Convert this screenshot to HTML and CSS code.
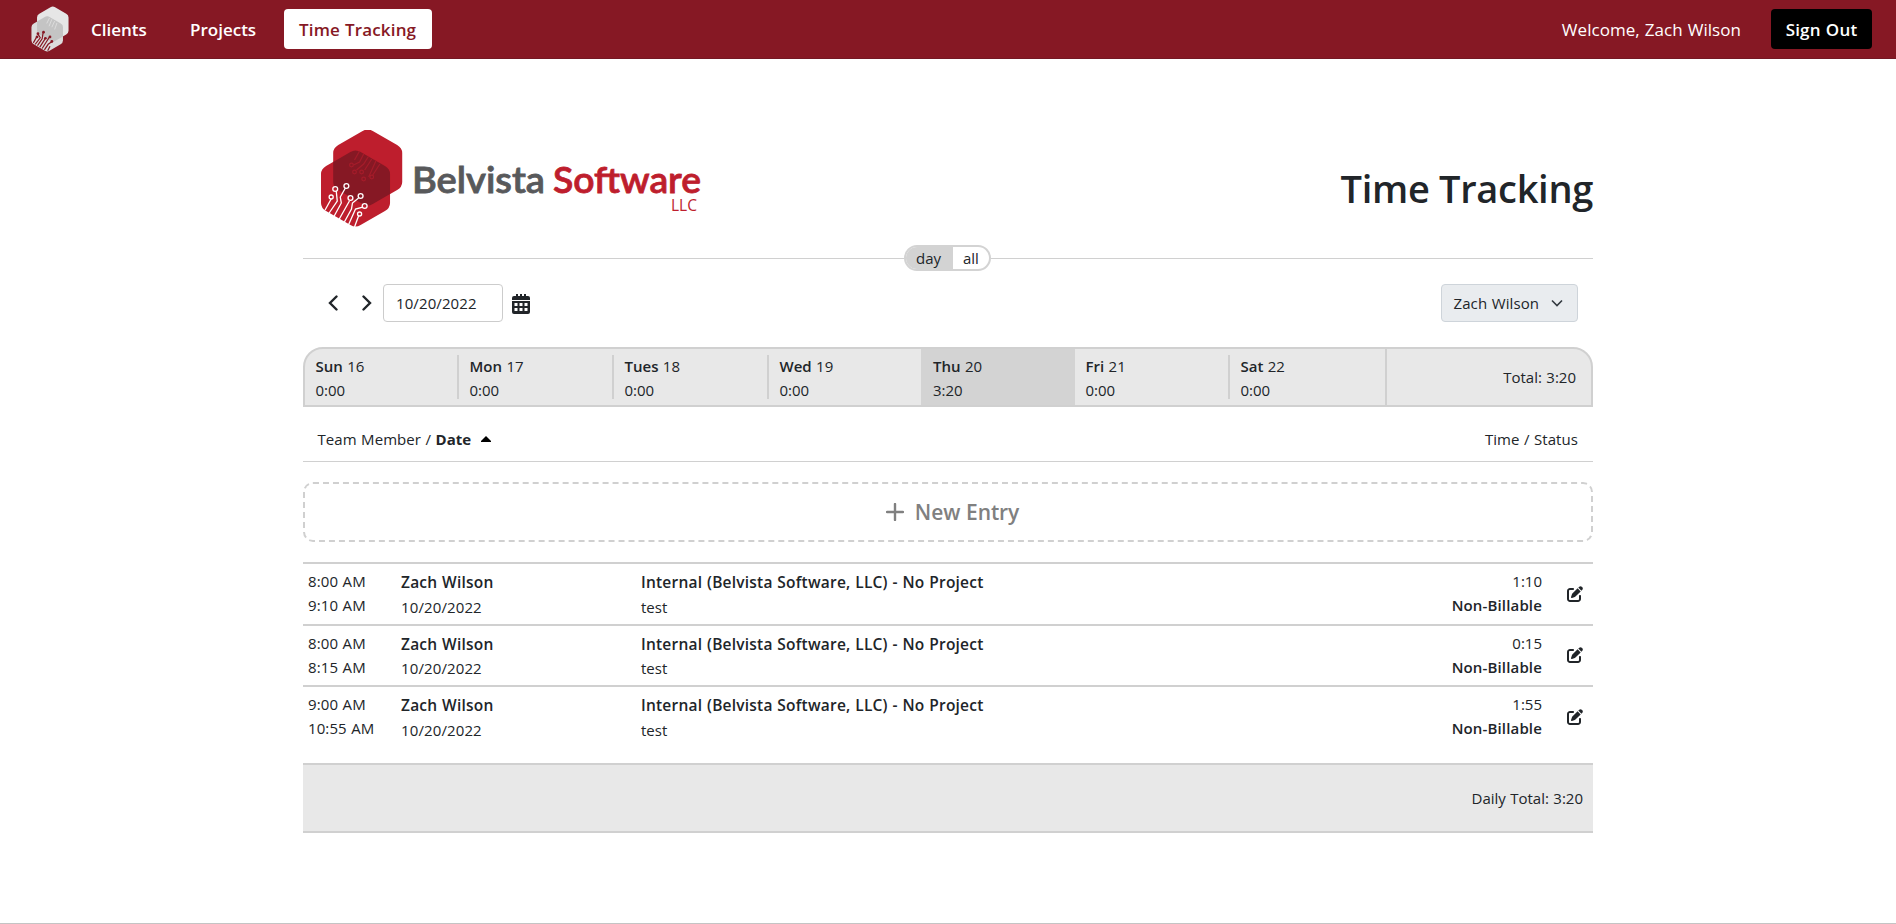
FILE: index.html
```html
<!DOCTYPE html>
<html lang="en">
<head>
<meta charset="utf-8">
<title>Time Tracking</title>
<link rel="stylesheet" href="styles.css">
</head>
<body>
<svg class="defs" width="0" height="0" aria-hidden="true">
  <symbol id="edit" viewBox="0 0 512 512"><path d="M471.600 21.700c-21.900-21.900-57.300-21.900-79.200 0L362.300 51.700l97.900 97.900 30.100-30.100c21.900-21.900 21.900-57.300 0-79.200L471.600 21.700zm-299.200 220c-6.100 6.100-10.800 13.600-13.500 21.900l-29.600 88.800c-2.900 8.600-.6 18.100 5.800 24.600s15.900 8.700 24.600 5.800l88.800-29.600c8.200-2.700 15.700-7.400 21.900-13.500L437.700 172.300 339.700 74.300 172.400 241.700zM96 64C43 64 0 107 0 160V416c0 53 43 96 96 96H352c53 0 96-43 96-96V320c0-17.700-14.300-32-32-32s-32 14.300-32 32v96c0 17.700-14.300 32-32 32H96c-17.700 0-32-14.300-32-32V160c0-17.700 14.300-32 32-32h96c17.700 0 32-14.300 32-32s-14.300-32-32-32H96z"/></symbol>
</svg>
<header class="nav">
  <svg class="nav-logo" viewBox="0 0 82 98">
    <path fill="#e6e6e6" d="M42 2q5-3 10 0L76 16q5 3 5 8V53q0 5-5 8L52 75q-5 3-10 0L18 61q-5-3-5-8V24q0-5 5-8z"/>
    <path fill="#dcdcdc" d="M30 23q5-3 10 0L64 37q5 3 5 8V74q0 5-5 8L40 96q-5 3-10 0L6 82q-5-3-5-8V45q0-5 5-8z"/>
    <path fill="#c4c4c4" d="M13 33 30 23q5-3 10 0L64 37q5 3 5 8V65L52 75q-5 3-10 0L18 61q-5-3-5-8z"/>
    <g fill="none" stroke="#861824" stroke-width="2.600"><path d="M5 79 13 65M9 82 20 68 15 60M14 85 24 70 26 58M19 88 30 71M24 91 33 77 40 66M29 94 37 82 44 77M36 96 41 86"/></g>
    <g fill="#861824"><circle cx="13" cy="66" r="3"/><circle cx="15" cy="59" r="3"/><circle cx="27" cy="56" r="3"/><circle cx="31" cy="69" r="3"/><circle cx="41" cy="66" r="3"/><circle cx="45" cy="76" r="3"/></g>
    <path fill="none" stroke="#dedede" stroke-width="2" d="M40 25 34 37M45 28 39 43M51 32 45 45M56 36 51 50"/>
  </svg>
  <nav class="nav-links">
    <a class="nav-link clients">Clients</a>
    <a class="nav-link projects">Projects</a>
    <a class="nav-link active">Time Tracking</a>
  </nav>
  <span class="welcome">Welcome, Zach Wilson</span>
  <a class="sign-out">Sign Out</a>
</header>
<main class="page">
  <section class="masthead">
    <svg class="brand" viewBox="0 0 390 106" role="img" aria-label="Belvista Software LLC">
      <g transform="translate(0 -1) scale(1.015 1)">
        <path fill="#be1e2d" d="M42 2q5-3 10 0L76 16q5 3 5 8V53q0 5-5 8L52 75q-5 3-10 0L18 61q-5-3-5-8V24q0-5 5-8z"/>
        <path fill="#be1e2d" d="M30 23q5-3 10 0L64 37q5 3 5 8V74q0 5-5 8L40 96q-5 3-10 0L6 82q-5-3-5-8V45q0-5 5-8z"/>
        <path fill="#861824" d="M13 33 30 23q5-3 10 0L64 37q5 3 5 8V65L52 75q-5 3-10 0L18 61q-5-3-5-8z"/>
        <g fill="none" stroke="#fff" stroke-width="1.300">
          <path d="M5 81 11 70M9 84 17 72 16 62M14 87 21 74 20 68 25 59M19 90 29 72M24 93 31 80 32 74 38 69M28 96 35 80 42 78M34 98 38 87"/>
          <circle cx="11" cy="68" r="2"/><circle cx="15" cy="60" r="2.400"/><circle cx="26" cy="57" r="2.400"/><circle cx="30" cy="69" r="2.400"/><circle cx="40" cy="67" r="2.400"/><circle cx="44" cy="77" r="2.400"/><circle cx="39" cy="85" r="2"/>
        </g>
        <g fill="none" stroke="#a51c2a" stroke-width="1.200">
          <path d="M39 22 34 31M43 25 39 33 33 36M48 27 43 35 36 41M51 30 44 41M55 32 48 48M59 35 52 46"/>
          <circle cx="31" cy="36" r="1.800"/><circle cx="34" cy="43" r="1.800"/><circle cx="41" cy="43" r="1.800"/><circle cx="43" cy="50" r="1.800"/><circle cx="51" cy="48" r="1.800"/>
        </g>
      </g>
      <text class="brand-a" x="92" y="63" textLength="133" lengthAdjust="spacingAndGlyphs">Belvista</text>
      <text class="brand-b" x="233" y="63" textLength="148" lengthAdjust="spacingAndGlyphs">Software</text>
      <text class="brand-c" x="351" y="81" textLength="26" lengthAdjust="spacingAndGlyphs">LLC</text>
    </svg>
    <h1 class="title">Time Tracking</h1>
  </section>
  <div class="divider"><div class="toggle"><span class="toggle-day">day</span><span class="toggle-all">all</span></div></div>
  <section class="filters">
    <svg class="chev" viewBox="0 0 10 16"><path d="M8.500 1.500 2 8l6.500 6.500"/></svg>
    <svg class="chev next" viewBox="0 0 10 16"><path d="M1.500 1.500 8 8l-6.500 6.500"/></svg>
    <div class="date-input">10/20/2022</div>
    <svg class="calendar" viewBox="0 0 18 20"><path fill="#212529" fill-rule="evenodd" d="M4 0h2v2h2V0h2v2h2V0h2v2h2q2 0 2 2v2H0V4q0-2 2-2h2zM0 7h18v11q0 2-2 2H2q-2 0-2-2zM2.500 9v3h3V9zM7.500 9v3h3V9zM12.500 9v3h3V9zM2.500 14v3h3v-3zM7.500 14v3h3v-3zM12.500 14v3h3v-3z"/></svg>
    <div class="person">Zach Wilson<svg viewBox="0 0 12 8"><path d="M1 1.500 6 6.500l5-5"/></svg></div>
  </section>
  <section class="week">
    <div class="day"><p><b>Sun</b> 16</p><p>0:00</p></div>
    <div class="day"><p><b>Mon</b> 17</p><p>0:00</p></div>
    <div class="day"><p><b>Tues</b> 18</p><p>0:00</p></div>
    <div class="day plain"><p><b>Wed</b> 19</p><p>0:00</p></div>
    <div class="day current"><p><b>Thu</b> 20</p><p>3:20</p></div>
    <div class="day"><p><b>Fri</b> 21</p><p>0:00</p></div>
    <div class="day plain"><p><b>Sat</b> 22</p><p>0:00</p></div>
    <div class="week-total">Total: 3:20</div>
  </section>
  <section class="columns">
    <span>Team Member / <strong>Date</strong><svg class="sort" viewBox="0 0 10 6"><path d="M5 0 10 5v1H0V5z"/></svg></span>
    <span class="ts">Time / Status</span>
  </section>
  <div class="new-entry"><svg viewBox="0 0 18 18"><path d="M9 1v16M1 9h16"/></svg><span>New Entry</span></div>
  <section class="entries">
    <article class="entry">
      <div class="times"><p>8:00 AM</p><p>9:10 AM</p></div>
      <div class="who"><h2>Zach Wilson</h2><p>10/20/2022</p></div>
      <div class="what"><h2>Internal (Belvista Software, LLC) - No Project</h2><p>test</p></div>
      <div class="status"><p>1:10</p><p class="nb">Non-Billable</p></div>
      <svg class="edit"><use href="#edit"/></svg>
    </article>
    <article class="entry second">
      <div class="times"><p>8:00 AM</p><p>8:15 AM</p></div>
      <div class="who"><h2>Zach Wilson</h2><p>10/20/2022</p></div>
      <div class="what"><h2>Internal (Belvista Software, LLC) - No Project</h2><p>test</p></div>
      <div class="status"><p>0:15</p><p class="nb">Non-Billable</p></div>
      <svg class="edit"><use href="#edit"/></svg>
    </article>
    <article class="entry last">
      <div class="times"><p>9:00 AM</p><p>10:55 AM</p></div>
      <div class="who"><h2>Zach Wilson</h2><p>10/20/2022</p></div>
      <div class="what"><h2>Internal (Belvista Software, LLC) - No Project</h2><p>test</p></div>
      <div class="status"><p>1:55</p><p class="nb">Non-Billable</p></div>
      <svg class="edit"><use href="#edit"/></svg>
    </article>
  </section>
  <div class="daily-total">Daily Total: 3:20</div>
</main>
<footer class="foot"></footer>
</body>
</html>
```

FILE: styles.css
```css
* { box-sizing: border-box; }
body { margin: 0; height: 924px; overflow: hidden; display: flex; flex-direction: column; background: #fff; color: #212529; font: 15px/24px "Open Sans", "Noto Sans", sans-serif; word-spacing: .5px; white-space: nowrap; }
p, h1, h2 { margin: 0; }
svg { flex: none; }
.defs { position: absolute; }
.nav { flex: none; height: 59px; background: #861824; border-bottom: 1px solid #741824; display: flex; align-items: center; padding: 0 24px 0 31px; color: #fff; font-size: 17px; }
.nav-logo { width: 38px; height: 46px; }
.nav-links { display: flex; margin-left: 7px; }
.nav-link { height: 40px; line-height: 41px; font-weight: 600; border-radius: 4px; padding-left: 15px; }
.clients { width: 99px; }
.projects { width: 109px; }
.active { width: 148px; background: #fff; color: #861824; letter-spacing: .15px; }
.welcome { margin-left: auto; padding-top: 1px; letter-spacing: .05px; }
.sign-out { width: 101px; height: 40px; margin-left: 30px; border-radius: 4px; background: #000; text-align: center; line-height: 41px; font-weight: 600; letter-spacing: .2px; }
.page { width: 1290px; margin-left: 303px; flex: none; }
.masthead { height: 186px; padding: 71px 0 0 17px; display: flex; justify-content: space-between; }
.brand { width: 390px; height: 106px; }
.brand-a, .brand-b { font: 600 37px Lato, sans-serif; stroke-width: .8px; }
.brand-a { fill: #58595b; stroke: #58595b; }
.brand-b { fill: #be1e2d; stroke: #be1e2d; }
.brand-c { font: 16.500px "Open Sans", sans-serif; fill: #be1e2d; }
.title { font-size: 38px; font-weight: 600; line-height: 48px; margin-top: 34px; letter-spacing: -.3px; word-spacing: 0; }
.divider { height: 26px; display: flex; justify-content: center; align-items: flex-start; padding-right: 1px; margin-right: -1px; }
.divider::before, .divider::after { content: ""; flex: none; width: 601px; height: 1px; margin-top: 13px; background: #d0d0d0; }
.divider::after { width: 602px; }
.toggle { display: flex; flex: none; width: 87px; height: 26px; border: 2px solid #d3d3d3; border-radius: 13px; overflow: hidden; line-height: 22px; }
.toggle-day { width: 47px; padding-left: 10px; background: #d3d3d3; }
.toggle-all { padding-left: 10px; }
.filters { height: 76px; padding: 13px 15px 0 25px; display: flex; align-items: flex-start; }
.chev { width: 10px; height: 16px; margin-top: 10.500px; fill: none; stroke: #212529; stroke-width: 2.4; stroke-linecap: round; }
.next { margin-left: 24px; }
.date-input { width: 120px; height: 38px; margin-left: 11px; border: 1px solid #ccc; border-radius: 4px; padding-left: 12px; line-height: 37px; letter-spacing: .1px; }
.calendar { width: 18px; height: 20px; margin: 10px 0 0 9px; }
.person { margin-left: auto; width: 137px; height: 38px; background: #e9ecef; border: 1px solid #ced4da; border-radius: 4px; padding: 0 14px 0 11.500px; line-height: 37px; display: flex; justify-content: space-between; align-items: center; letter-spacing: .1px; }
.person svg { width: 12px; height: 8px; fill: none; stroke: #343a40; stroke-width: 1.6; }
.week { height: 60px; border: 2px solid #d0d0d0; border-radius: 20px 20px 0 0; background: #e8e8e8; display: grid; grid-template-columns: 154px 155px 155px 152px 154px 155px 155px 1fr; overflow: hidden; }
.day { padding: 5px 0 0 10.500px; position: relative; }
.day:not(.plain):not(.current)::after { content: ""; position: absolute; right: 0; top: 6px; width: 2px; height: 44px; background: #d0d0d0; }
.day b { font-weight: 600; }
.current { padding-left: 12px; background: #d3d3d3; }
.week-total { border-left: 2px solid #d0d0d0; padding-right: 15px; text-align: right; line-height: 56px; }
.columns { height: 55px; border-bottom: 1px solid #d0d0d0; padding: 20px 15px 0 14.500px; display: flex; justify-content: space-between; }
.columns span { letter-spacing: .06px; }
.sort { width: 10px; height: 6px; margin-left: 10px; vertical-align: 3px; }
.new-entry { height: 60px; margin: 20px 0; border: 2px dashed #d0d0d0; border-radius: 10px; color: #808080; font-size: 21px; font-weight: 600; letter-spacing: -.1px; display: flex; justify-content: center; align-items: center; padding: 0 0 1px 9px; }
.new-entry svg { width: 18px; height: 18px; margin-right: 11px; fill: none; stroke: #808080; stroke-width: 2.4; stroke-linecap: round; }
.entry { height: 62px; border-top: 2px solid #d0d0d0; padding: 5px 10px 0 5px; display: flex; }
.second { height: 61px; }
.last { height: 78px; }
.entry h2 { font-size: 15.500px; font-weight: 600; line-height: 25px; letter-spacing: .22px; padding-top: 1px; }
.second h2 { line-height: 24px; }
.times { width: 93px; letter-spacing: .1px; }
.who { width: 240px; letter-spacing: .12px; }
.status { margin-left: auto; text-align: right; }
.nb { font-weight: 600; letter-spacing: .15px; }
.edit { width: 16px; height: 16px; margin: 17px 0 0 25px; fill: #212529; }
.second .edit { margin-top: 16px; }
.daily-total { height: 70px; border: 2px solid #d0d0d0; border-width: 2px 0; background: #e8e8e8; padding-right: 10px; text-align: right; line-height: 67px; }
.foot { margin-top: auto; height: 1px; background: #c4c4c4; flex: none; }
```
